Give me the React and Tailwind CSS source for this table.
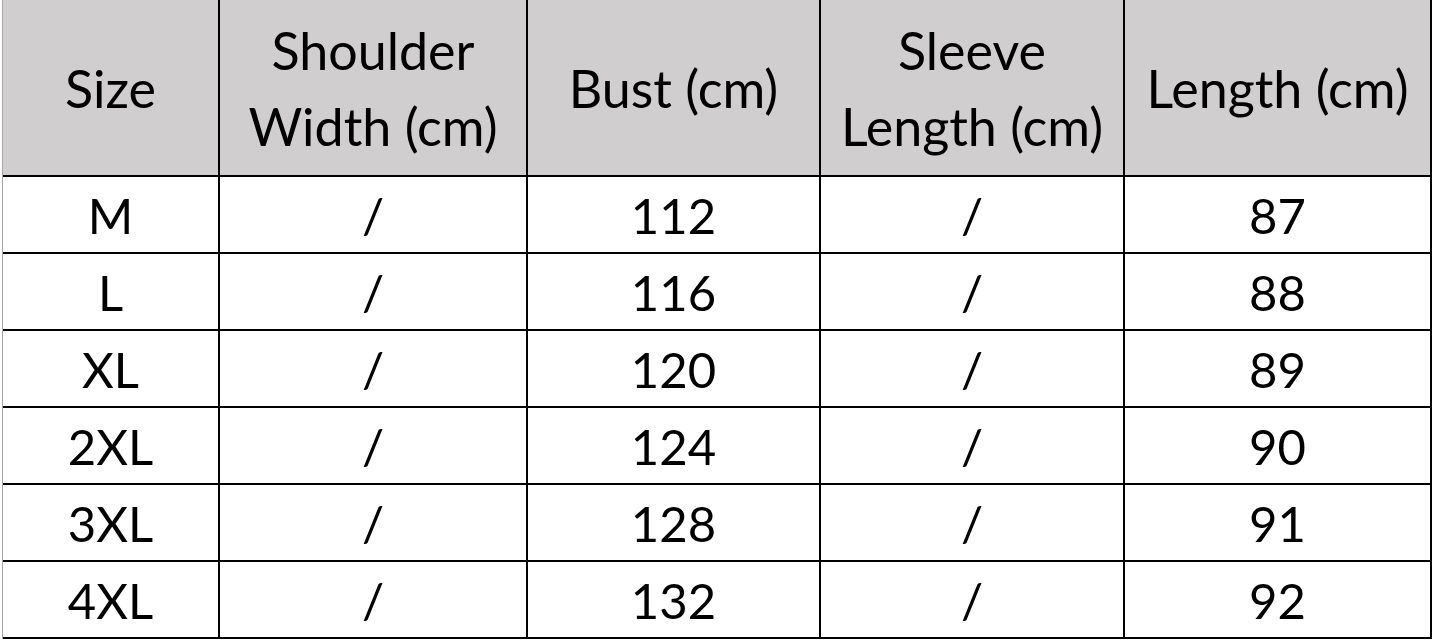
const headers = [
  ["Size"],
  ["Shoulder", "Width (cm)"],
  ["Bust (cm)"],
  ["Sleeve", "Length (cm)"],
  ["Length (cm)"],
];

const rows = [
  ["M", "/", "112", "/", "87"],
  ["L", "/", "116", "/", "88"],
  ["XL", "/", "120", "/", "89"],
  ["2XL", "/", "124", "/", "90"],
  ["3XL", "/", "128", "/", "91"],
  ["4XL", "/", "132", "/", "92"],
];

export default function App() {
  return (
    <div className="w-[1432px] h-[641px] bg-white overflow-hidden pl-[2px]">
      <div
        className="grid grid-cols-[217px_308px_293px_304px_307px] grid-rows-[177px_repeat(6,77px)] border-l border-[#a6a6a6] text-black text-[49px]"
        style={{ fontFamily: "Lato, 'Open Sans', sans-serif" }}
      >
        {/* HEADER */}
        {headers.map((lines, i) => (
          <div
            key={i}
            className="bg-[#d0cece] border-r-2 border-b-2 border-black flex flex-col items-center justify-center leading-[76px] text-[52px] text-center"
          >
            {lines.map((l) => (
              <span key={l}>{l}</span>
            ))}
          </div>
        ))}

        {/* BODY */}
        {rows.map((row, r) =>
          row.map((cell, c) => (
            <div
              key={`${r}-${c}`}
              className="border-r-2 border-b-2 border-black flex items-center justify-center pt-[3px]"
            >
              {cell}
            </div>
          ))
        )}
      </div>
    </div>
  );
}
